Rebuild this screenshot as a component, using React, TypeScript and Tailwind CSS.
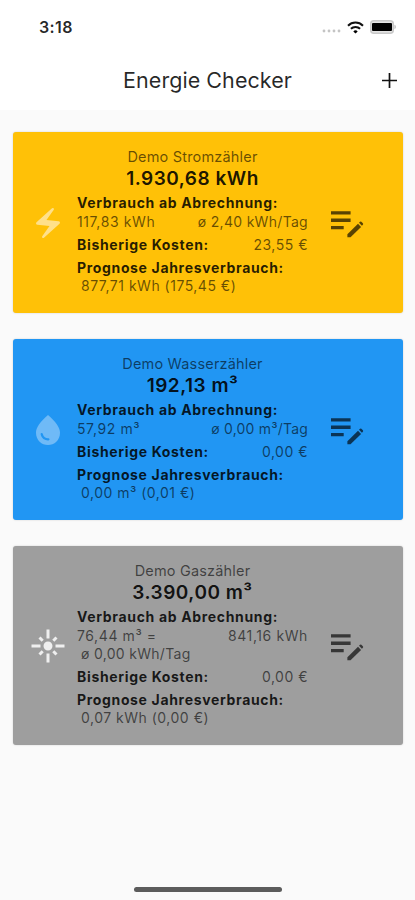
import type { IconType } from "react-icons";
import { MdElectricBolt, MdFlare, MdWaterDrop } from "react-icons/md";

type Meter = {
  name: string;
  reading: string;
  usage: string;
  usageRight: string;
  rightTracking: string;
  usageExtra?: string;
  costs: string;
  forecast: string;
  icon: IconType;
  color: string;
  iconColor: string;
};

const meters: Meter[] = [
  {
    name: "Demo Stromzähler",
    reading: "1.930,68 kWh",
    usage: "117,83 kWh",
    usageRight: "ø 2,40 kWh/Tag",
    rightTracking: "tracking-[0.3px]",
    costs: "23,55 €",
    forecast: "877,71 kWh (175,45 €)",
    icon: MdElectricBolt,
    color: "bg-[#ffc107]",
    iconColor: "text-[#ffe08a]",
  },
  {
    name: "Demo Wasserzähler",
    reading: "192,13 m³",
    usage: "57,92 m³",
    usageRight: "ø 0,00 m³/Tag",
    rightTracking: "tracking-[0.2px]",
    costs: "0,00 €",
    forecast: "0,00 m³ (0,01 €)",
    icon: MdWaterDrop,
    color: "bg-[#2196f3]",
    iconColor: "text-[#6fbaf7]",
  },
  {
    name: "Demo Gaszähler",
    reading: "3.390,00 m³",
    usage: "76,44 m³ =",
    usageRight: "841,16 kWh",
    rightTracking: "tracking-[0.6px]",
    usageExtra: "ø 0,00 kWh/Tag",
    costs: "0,00 €",
    forecast: "0,07 kWh (0,00 €)",
    icon: MdFlare,
    color: "bg-[#9e9e9e]",
    iconColor: "text-[#efefef]",
  },
];

function StatusBar() {
  return (
    <div className="flex h-[54px] items-center justify-between pr-[18px] pl-[39px]">
      <span className="text-[16px] font-semibold tracking-[0.4px] text-black/85">3:18</span>
      <div className="flex items-center">
        <svg width="20" height="12" viewBox="0 0 20 12" className="mr-[5px]">
          <g fill="#c4c4c4">
            <circle cx="2" cy="10" r="1.4" />
            <circle cx="7" cy="10" r="1.4" />
            <circle cx="12" cy="10" r="1.4" />
            <circle cx="17" cy="10" r="1.4" />
          </g>
        </svg>
        <svg width="17" height="13" viewBox="0 0 17 13" className="mr-[6px]">
          <g fill="none" stroke="#111" strokeWidth="2">
            <path d="M1 4.7a10.6 10.6 0 0 1 15 0" />
            <path d="M3.9 7.8a6.5 6.5 0 0 1 9.2 0" />
          </g>
          <path d="M8.5 12.6 6.3 10.4a3.1 3.1 0 0 1 4.4 0z" />
        </svg>
        <svg width="27" height="14" viewBox="0 0 27 14">
          <rect x="0.75" y="0.75" width="22.5" height="12.5" rx="3" fill="#e4e4e4" stroke="#c8c8c8" strokeWidth="1.5" />
          <rect x="2" y="3" width="20" height="8" rx="1" />
          <path d="M24.5 4.8c1.7.6 1.7 3.8 0 4.4z" fill="#b5b5b5" />
        </svg>
      </div>
    </div>
  );
}

function EditNoteIcon() {
  return (
    <svg width="34" height="28" viewBox="0 0 34 28" fill="currentColor">
      <path d="M0 1.3h19.6v3.3H0zM0 8.6h19.6v3.3H0zM0 16h12.7v3.3H0z" />
      <path d="M16.4 27.3v-3.1l10.6-10.4 3.1 3.1-10.6 10.4z" />
      <path d="m28 12.8 1-1q.7-.6 1.4 0l1.5 1.5q.6.7 0 1.4l-1 1z" />
    </svg>
  );
}

function MeterCard({ meter }: { meter: Meter }) {
  const Icon = meter.icon;

  return (
    <section
      className={`flex items-center rounded-[3px] pt-[16px] pb-[18px] shadow-[0_0_2px_rgba(0,0,0,0.18)] ${meter.color}`}
    >
      <div className="flex w-[64px] shrink-0 justify-center pt-[2px] pl-[6px]">
        <Icon size={36} className={meter.iconColor} />
      </div>

      <div className="w-[231px] shrink-0 text-[14px] leading-[18px] tracking-[0.5px] text-black/60">
        <p className="text-center text-[14.5px] tracking-[0.18px]">{meter.name}</p>
        <p className="mt-px text-center text-[19px] leading-6 font-semibold text-black/90">
          {meter.reading}
        </p>

        <h2 className="mt-[3px] font-bold tracking-[0.66px] text-black/85">
          Verbrauch ab Abrechnung:
        </h2>
        <div className="mt-px flex justify-between">
          <span className="tracking-[0.6px]">{meter.usage}</span>
          <span className={meter.rightTracking}>{meter.usageRight}</span>
        </div>
        {meter.usageExtra && (
          <p className="pl-1 tracking-[0.3px]">{meter.usageExtra}</p>
        )}

        <div className="mt-[5px] flex justify-between">
          <h2 className="font-bold tracking-[0.66px] text-black/85">Bisherige Kosten:</h2>
          <span>{meter.costs}</span>
        </div>

        <h2 className="mt-[5px] font-bold tracking-[0.66px] text-black/85">
          Prognose Jahresverbrauch:
        </h2>
        <p className="pl-1">{meter.forecast}</p>
      </div>

      <button aria-label="Bearbeiten" className="ml-[23px] pt-[5px] text-black/65">
        <EditNoteIcon />
      </button>
    </section>
  );
}

export default function App() {
  return (
    <div className="flex h-[900px] w-[415px] flex-col overflow-hidden bg-[#fafafa] font-['Inter',sans-serif] text-black">
      <header className="h-[110px] bg-white">
        <StatusBar />
        <div className="relative flex h-[53px] items-center justify-center">
          <h1 className="text-[21.5px] tracking-[0.05px] text-black/85">Energie Checker</h1>
          <button aria-label="Hinzufügen" className="absolute right-[18px]">
            <svg width="15" height="15" viewBox="0 0 15 15" stroke="#111" strokeWidth="1.7">
              <path d="M7.5 0v15M0 7.5h15" />
            </svg>
          </button>
        </div>
      </header>

      <main className="flex flex-1 flex-col gap-[26px] pt-[22px] pr-[12px] pl-[13px]">
        {meters.map((meter) => (
          <MeterCard key={meter.name} meter={meter} />
        ))}
      </main>

      <div className="mb-[8px] ml-[134px] h-[5px] w-[148px] rounded-full bg-[#5c5c5c]" />
    </div>
  );
}
